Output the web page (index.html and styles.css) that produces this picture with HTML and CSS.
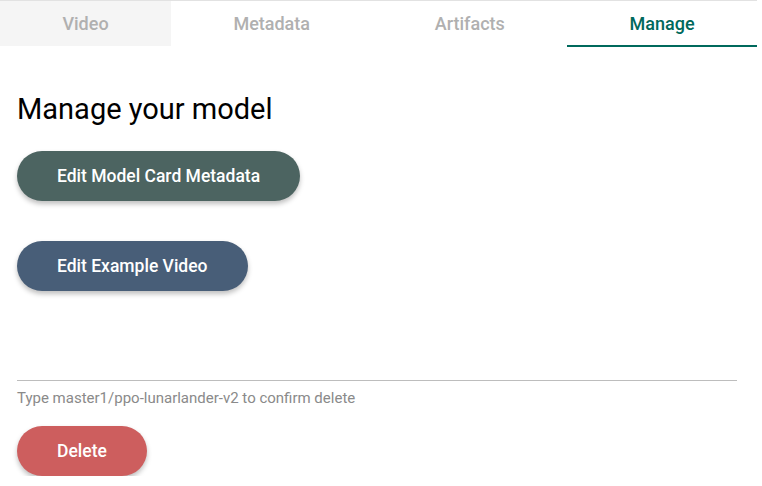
FILE: index.html
```html
<!DOCTYPE html>
<html>
<head>
<meta charset="utf-8">
<link rel="stylesheet" href="styles.css">
</head>
<body>
<div class="page">
  <nav class="tabs">
    <div class="tab tab-hover">Video</div>
    <div class="tab">Metadata</div>
    <div class="tab">Artifacts</div>
    <div class="tab tab-active">Manage</div>
  </nav>
  <main class="content">
    <h1 class="title">Manage your model</h1>
    <div class="actions">
      <button class="btn btn-meta">Edit Model Card Metadata</button>
      <button class="btn btn-video">Edit Example Video</button>
    </div>
    <div class="confirm">
      <div class="field"></div>
      <div class="helper">Type master1/ppo-lunarlander-v2 to confirm delete</div>
    </div>
    <button class="btn btn-delete">Delete</button>
  </main>
</div>
</body>
</html>
```

FILE: styles.css
```css
* { box-sizing: border-box; }
html, body { margin: 0; padding: 0; background: #fff; }
body { font-family: Roboto, "Noto Sans", sans-serif; }
.page { width: 757px; }
.tabs {
  display: flex;
  border-top: 1px solid #e2e2e2;
  height: 47px;
}
.tab {
  flex: 1 1 auto;
  text-align: center;
  font-size: 18px;
  font-weight: 500;
  color: #b0b0b0;
  padding-top: 12px;
  line-height: 22px;
  height: 46px;
}
.tab-hover { background: #f5f5f5; height: 45px; }
.tab-active { color: #00695c; border-bottom: 2px solid #00695c; }
.content { padding: 0 17px; }
.title {
  margin: 46px 0 0;
  font-size: 29px;
  font-weight: 400;
  color: #000;
  line-height: 32px;
}
.actions {
  display: flex;
  flex-direction: column;
  align-items: flex-start;
  gap: 40px;
  margin-top: 26px;
}
.btn {
  border: none;
  height: 50px;
  border-radius: 25px;
  padding: 0 40px;
  font-family: Roboto, sans-serif;
  font-size: 17.5px;
  font-weight: 500;
  color: #fff;
  box-shadow: 0 3px 5px rgba(0,0,0,0.25);
  display: block;
}
.btn-meta { background: #4c6461; }
.btn-video { background: #485e78; }
.btn-delete { background: #cd5e5e; margin-top: 19px; }
.confirm { margin-top: 89px; width: 720px; }
.field { border-top: 1px solid #bdbdbd; }
.helper {
  font-size: 15px;
  color: #8a8a8a;
  margin-top: 8px;
  line-height: 18px;
}
```
